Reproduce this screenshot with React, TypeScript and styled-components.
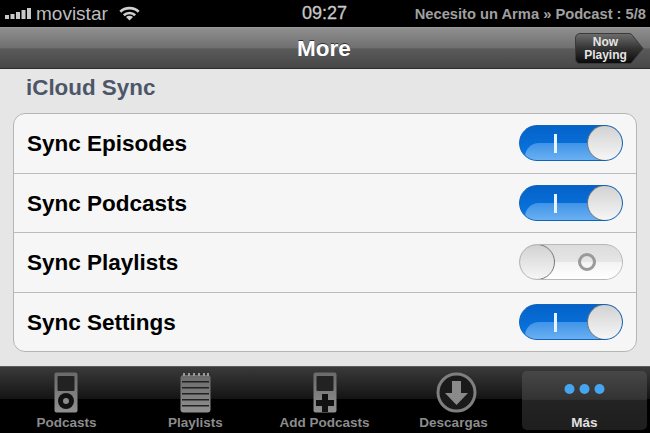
import { createGlobalStyle } from "styled-components"
import styled from "styled-components"

const GlobalStyle = createGlobalStyle`
  html, body {
    margin: 0;
    padding: 0;
    background: #000;
  }
  body {
    font-family: "Liberation Sans", Arial, sans-serif;
  }
`

const Screen = styled.div`
  width: 650px;
  height: 433px;
  display: flex;
  flex-direction: column;
  overflow: hidden;
  background: #e6e6e6;
`

const StatusBar = styled.div`
  height: 27px;
  background: #000;
  display: grid;
  grid-template-columns: 1fr auto 1fr;
  align-items: center;
  padding: 0 4px 0 5px;
  color: #b9b9b9;
  font-weight: 700;
`

const Carrier = styled.div`
  display: flex;
  align-items: center;
  font-size: 19px;
  font-weight: 400;
  color: #bdbdbd;
  gap: 5px;
`

const SignalIcon = styled.svg`
  flex: none;
`

const WifiIcon = styled.svg`
  flex: none;
  margin-left: 6px;
`

const Clock = styled.div`
  font-size: 18px;
  font-weight: 400;
  color: #c8c8c8;
  -webkit-text-stroke: 0.3px #c8c8c8;
  margin-left: -2px;
`

const TrackInfo = styled.div`
  font-size: 14.7px;
  text-align: right;
  color: #a0a0a0;
  white-space: nowrap;
`

const NavBar = styled.div`
  height: 42px;
  box-sizing: border-box;
  position: relative;
  display: flex;
  align-items: center;
  justify-content: center;
  border-top: 1px solid #9a9a9a;
  border-bottom: 1px solid #2c2c2c;
  background: linear-gradient(#8f8f8f 0%, #6f6f6f 50%, #5a5a5a 52%, #474747 100%);
`

const NavTitle = styled.div`
  color: #fff;
  font-size: 22.5px;
  font-weight: 700;
  text-shadow: 0 -1px 0 #333;
  padding: 2px 2px 0 0;
`

const NowPlaying = styled.div`
  position: absolute;
  top: 5px;
  right: 6px;
  width: 69px;
  height: 31px;
  display: flex;
`

const NowPlayingShape = styled.svg`
  position: absolute;
  inset: 0;
`

const NowPlayingLabel = styled.div`
  position: relative;
  width: 61px;
  text-align: center;
  color: #e4e4e4;
  font-size: 12px;
  font-weight: 700;
  line-height: 13px;
  padding-top: 3px;
`

const Content = styled.div`
  flex: 1;
  display: flex;
  flex-direction: column;
  padding: 0 13px;
  border-bottom: 1px solid #5e5e5e;
`

const SectionTitle = styled.h2`
  margin: 0;
  padding: 6px 0 0 13px;
  height: 38px;
  box-sizing: border-box;
  font-size: 22.4px;
  line-height: 26px;
  font-weight: 700;
  color: #4d5669;
`

const Card = styled.div`
  margin-top: 6px;
  height: 239px;
  box-sizing: border-box;
  border: 1px solid #b5b5b5;
  border-radius: 12px;
  background: #f6f6f6;
  display: flex;
  flex-direction: column;
`

const Row = styled.div`
  flex: 1;
  display: flex;
  align-items: center;
  justify-content: space-between;
  padding: 0 13px 0 13px;
  border-bottom: 1px solid #bcbcbc;

  &:last-child {
    border-bottom: none;
  }
`

const RowLabel = styled.span`
  font-size: 22.5px;
  font-weight: 700;
  color: #000;
  margin-top: 2px;
`

const Switch = styled.div<{ $on: boolean }>`
  position: relative;
  width: 104px;
  height: 36px;
  box-sizing: border-box;
  border-radius: 18px;
  border: 1px solid ${(p) => (p.$on ? "#1063b8" : "#b8b8b8")};
  overflow: hidden;
  background: ${(p) =>
    p.$on
      ? "linear-gradient(#0462c8 0%, #0a78e4 100%)"
      : "linear-gradient(#dcdcdc 0%, #f0f0f0 100%)"};

  &::before {
    content: "";
    position: absolute;
    left: 5px;
    right: 0;
    top: 17px;
    bottom: 0;
    border-top-left-radius: 14px;
    background: ${(p) =>
      p.$on
        ? "linear-gradient(#3f93e8 0%, #6ab0f2 100%)"
        : "linear-gradient(#f3f3f3 0%, #ffffff 100%)"};
  }
`

const Knob = styled.div<{ $on: boolean }>`
  position: absolute;
  top: -1px;
  ${(p) => (p.$on ? "right: -1px;" : "left: -1px;")}
  width: 36px;
  height: 36px;
  box-sizing: border-box;
  border-radius: 50%;
  border: 1px solid #777;
  background: linear-gradient(#d2d2d2, #f6f6f6);
`

const OnMark = styled.div`
  position: absolute;
  left: 34px;
  top: 8px;
  width: 3px;
  height: 19px;
  background: #e8f3ff;
`

const OffMark = styled.div`
  position: absolute;
  right: 26px;
  top: 8px;
  width: 18px;
  height: 18px;
  box-sizing: border-box;
  border-radius: 50%;
  border: 3px solid #9a9a9a;
`

const TabBar = styled.div`
  height: 66px;
  box-sizing: border-box;
  display: grid;
  grid-template-columns: repeat(5, 1fr);
  padding: 4px 3px 3px 2px;
  background: linear-gradient(#3a3a3a 0%, #141414 48%, #000 49%, #000 100%);
`

const Tab = styled.div<{ $active?: boolean }>`
  display: flex;
  flex-direction: column;
  align-items: center;
  border-radius: 5px;
  background: ${(p) =>
    p.$active
      ? "linear-gradient(#474747 0%, #333 48%, #232323 50%, #1e1e1e 100%)"
      : "transparent"};
  margin-left: ${(p) => (p.$active ? "4px" : "0")};
`

const TabIcon = styled.svg<{ $shift?: number }>`
  flex: none;
  margin-top: 1px;
  margin-left: ${(p) => p.$shift ?? 0}px;
`

const TabLabel = styled.span<{ $active?: boolean }>`
  font-size: 13.5px;
  font-weight: 700;
  color: ${(p) => (p.$active ? "#e2e2e2" : "#8c8c8c")};
  margin-top: 2px;
  line-height: 15px;
`

const rows = [
  { label: "Sync Episodes", on: true },
  { label: "Sync Podcasts", on: true },
  { label: "Sync Playlists", on: false },
  { label: "Sync Settings", on: true },
]

const IconGradient = () => (
  <defs>
    <linearGradient id="tabMetal" x1="0" y1="0" x2="0" y2="1">
      <stop offset="0" stopColor="#6a6a6a" />
      <stop offset="1" stopColor="#909090" />
    </linearGradient>
    <linearGradient id="npBg" x1="0" y1="0" x2="0" y2="1">
      <stop offset="0" stopColor="#6e6e6e" />
      <stop offset="0.5" stopColor="#333" />
      <stop offset="1" stopColor="#0a0a0a" />
    </linearGradient>
  </defs>
)

const PodcastsIcon = () => (
  <TabIcon $shift={-2} width="24" height="41" viewBox="0 0 24 41">
    <rect x="0.5" y="0.5" width="23" height="40" rx="2" fill="url(#tabMetal)" />
    <rect x="3.5" y="4" width="17" height="15" rx="1" fill="#222" />
    <circle cx="12" cy="29" r="8" fill="#111" />
    <circle cx="12" cy="29" r="3" fill="#8a8a8a" />
  </TabIcon>
)

const PlaylistsIcon = () => (
  <TabIcon width="31" height="41" viewBox="0 0 31 41">
    <rect x="0.5" y="3" width="30" height="37.5" rx="3" fill="url(#tabMetal)" />
    {[3, 8, 13, 18, 23, 27].map((x) => (
      <rect key={x} x={x} y="1" width="2" height="3" fill="#9a9a9a" />
    ))}
    {[9, 15, 21, 27, 33].map((y) => (
      <rect key={y} x="2" y={y} width="27" height="1.5" fill="#222" />
    ))}
  </TabIcon>
)

const AddPodcastsIcon = () => (
  <TabIcon $shift={1} width="24" height="41" viewBox="0 0 24 41">
    <rect x="0.5" y="0.5" width="23" height="40" rx="2" fill="url(#tabMetal)" />
    <rect x="3.5" y="4" width="17" height="15" rx="1" fill="#222" />
    <path d="M9 22h6v6h6v6h-6v6H9v-6H3v-6h6z" fill="#111" />
  </TabIcon>
)

const DownloadsIcon = () => (
  <TabIcon $shift={5} width="41" height="41" viewBox="0 0 41 41">
    <circle cx="20.5" cy="20.5" r="18.5" fill="#1a1a1a" stroke="#7f7f7f" strokeWidth="3" />
    <path d="M16 9h9v12h7L20.5 33 9 21h7z" fill="#8a8a8a" />
  </TabIcon>
)

const MoreIcon = () => (
  <TabIcon width="41" height="41" viewBox="0 0 41 41">
    <circle cx="5.5" cy="17" r="5" fill="#45a5ee" />
    <circle cx="20.5" cy="17" r="5" fill="#45a5ee" />
    <circle cx="35.5" cy="17" r="5" fill="#45a5ee" />
  </TabIcon>
)

const App = () => {
  return (
    <Screen>
      <GlobalStyle />
      <svg width="0" height="0" style={{ position: "absolute" }}>
        <IconGradient />
      </svg>
      <StatusBar>
        <Carrier>
          <SignalIcon width="26" height="12" viewBox="0 0 26 12">
            <rect x="0" y="7" width="4" height="4" fill="#c8c8c8" />
            <rect x="5.5" y="6" width="4" height="5" fill="#c8c8c8" />
            <rect x="11" y="4" width="4" height="7" fill="#c8c8c8" />
            <rect x="16.5" y="2" width="4" height="9" fill="#c8c8c8" />
            <rect x="22" y="0" width="4" height="11" fill="#c8c8c8" />
          </SignalIcon>
          <span>movistar</span>
          <WifiIcon width="21" height="15" viewBox="0 0 24 16">
            <path d="M1.500 6C7 .5 17 .5 22.500 6" fill="none" stroke="#d0d0d0" strokeWidth="3" />
            <path d="M5.500 10C9 6.500 15 6.500 18.500 10" fill="none" stroke="#d0d0d0" strokeWidth="3" />
            <path d="M8 12C10.500 10 13.500 10 16 12L12 16z" fill="#d0d0d0" />
          </WifiIcon>
        </Carrier>
        <Clock>09:27</Clock>
        <TrackInfo>Necesito un Arma » Podcast : 5/8</TrackInfo>
      </StatusBar>
      <NavBar>
        <NavTitle>More</NavTitle>
        <NowPlaying>
          <NowPlayingShape width="69" height="31" viewBox="0 0 69 31">
            <path
              d="M5 .5h49c1.500 0 2.500.5 3.500 2L68 15.500 57.500 28.500c-1 1.500-2 2-3.500 2H5a4.500 4.500 0 0 1-4.500-4.500V5A4.500 4.500 0 0 1 5 .5z"
              fill="url(#npBg)"
              stroke="#3a3a3a"
            />
          </NowPlayingShape>
          <NowPlayingLabel>Now Playing</NowPlayingLabel>
        </NowPlaying>
      </NavBar>
      <Content>
        <SectionTitle>iCloud Sync</SectionTitle>
        <Card>
          {rows.map((row) => (
            <Row key={row.label}>
              <RowLabel>{row.label}</RowLabel>
              <Switch $on={row.on}>
                {row.on ? <OnMark /> : <OffMark />}
                <Knob $on={row.on} />
              </Switch>
            </Row>
          ))}
        </Card>
      </Content>
      <TabBar>
        <Tab>
          <PodcastsIcon />
          <TabLabel>Podcasts</TabLabel>
        </Tab>
        <Tab>
          <PlaylistsIcon />
          <TabLabel>Playlists</TabLabel>
        </Tab>
        <Tab>
          <AddPodcastsIcon />
          <TabLabel>Add Podcasts</TabLabel>
        </Tab>
        <Tab>
          <DownloadsIcon />
          <TabLabel>Descargas</TabLabel>
        </Tab>
        <Tab $active>
          <MoreIcon />
          <TabLabel $active>Más</TabLabel>
        </Tab>
      </TabBar>
    </Screen>
  )
}

export default App
